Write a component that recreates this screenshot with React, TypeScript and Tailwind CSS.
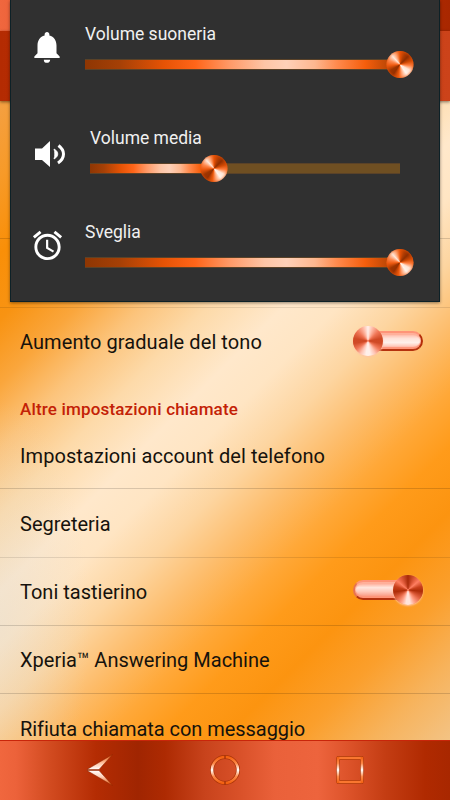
import type React from "react"
import { MdAlarm, MdNotifications } from "react-icons/md"
import { clsx } from "clsx"

const SLIDER_FILL =
  "bg-[linear-gradient(90deg,#8e3603_0%,#a54006_11%,#e65305_25%,#ff6519_35%,#ff9a68_46%,#fdc5a6_57%,#fdd0b8_64%,#fdb78f_73%,#ff8a4d_80%,#f55e0c_89%,#b54405_97%,#b54405_100%)]"

const NAV_GRADIENT =
  "bg-[linear-gradient(90deg,#f0673e_0px,#ec623a_16px,#d24b20_50px,#b42c03_96px,#a02501_138px,#ad2a02_165px,#c8431c_205px,#d95129_240px,#ea613a_275px,#ed643d_318px,#dd532a_348px,#c43d13_385px,#b02a01_425px,#a82700_450px)]"

function VolumeIcon() {
  return (
    <svg viewBox="0 0 38 38" className="size-[38px]" fill="none">
      <path d="M7 13.500h7L22 6v26L14 25H7z" fill="white" />
      <path d="M26 14c1.500 1 3.800 2.200 3.800 5s-2.300 4-3.800 5c.6-1.700.8-3.200.8-5s-.2-3.300-.8-5z" fill="white" stroke="white" strokeWidth="0.800" />
      <path d="M30.500 10.500c3.300 2.500 5 5 5 8.500s-1.700 6.500-5.500 9" stroke="white" strokeWidth="3" />
    </svg>
  )
}

function Slider({ label, value, inset }: { label: string; value: number; inset?: boolean }) {
  return (
    <div className={clsx("flex flex-col", inset ? "w-[310px]" : "w-[315px]")}>
      <span className="h-6 whitespace-nowrap text-[17.5px] leading-6 text-[#f0f0f0]">{label}</span>
      <div className="relative mt-[13px] h-[11px] border-y border-[#5a4228] bg-[#6f4f22]">
        <div className={clsx("h-full", SLIDER_FILL)} style={{ width: `${value}%` }} />
        <div
          className="absolute top-[-9.5px] size-[27px] -translate-x-1/2 rounded-full bg-[conic-gradient(#e85206_0deg,#b33d02_22deg,#8f2e00_45deg,#d24a04_72deg,#ff7d3c_95deg,#ffe4d4_120deg,#fff3ea_145deg,#ff9f6e_170deg,#ef5a0c_188deg,#963000_215deg,#9e3500_238deg,#ee5a10_265deg,#ff8a50_290deg,#ffe8da_318deg,#ff9c68_340deg,#e85206_360deg)] shadow-[inset_0_0_3px_#e55208]"
          style={{ left: `${value}%` }}
        />
      </div>
    </div>
  )
}

function Switch({ on }: { on?: boolean }) {
  return (
    <div className="relative flex h-[30px] w-[70px] flex-col justify-center">
      <div
        className={clsx(
          "h-5 rounded-full border-2 border-t-[#ff9478] border-b-[#b5320e] shadow-[inset_0_2px_1px_#ffb09a,inset_0_-2px_1px_#ff9478]",
          on
            ? "border-r-[#d9532f] border-l-[#e8724f] bg-[linear-gradient(#ff9b82,#ffe6de_35%,#ffc9bb_60%,#f98a70)]"
            : "border-r-[#b52c08] border-l-[#e8724f] bg-[linear-gradient(#ffab96,#ffe3da_35%,#fff0ea_60%,#ffab96)]",
        )}
      />
      <div
        className={clsx(
          "absolute top-0 size-[30px] rounded-full shadow-[0_1px_2px_#ffc4a4]",
          on
            ? "right-0 bg-[conic-gradient(#a82a08_0deg,#e86242_35deg,#ff8062_50deg,#c9401c_75deg,#ad2c08_95deg,#e0603e_125deg,#ff9c82_150deg,#ffe4dc_172deg,#ffe4dc_188deg,#ff9c82_210deg,#e0603e_235deg,#ad2c08_262deg,#c9401c_285deg,#ff8062_310deg,#e86242_325deg,#a82a08_360deg)]"
            : "left-0 bg-[conic-gradient(#fff0ea_0deg,#ffb9a4_20deg,#f07656_48deg,#cf4824_80deg,#d04a26_100deg,#f07656_125deg,#ffc3b2_150deg,#fff0ea_172deg,#fff0ea_188deg,#ffc3b2_210deg,#f07656_235deg,#d04a26_260deg,#cf4824_280deg,#f07656_312deg,#ffb9a4_340deg,#fff0ea_360deg)]",
        )}
      />
    </div>
  )
}

function Row({ label, className, children }: { label: string; className: string; children?: React.ReactNode }) {
  return (
    <div className={clsx("flex shrink-0 justify-between pr-[27px] pl-5", className)}>
      <span className="h-7 whitespace-nowrap text-[20px] leading-7 text-[#16120c]">{label}</span>
      {children}
    </div>
  )
}

function VolumePanel() {
  return (
    <div className="absolute top-0 left-[10px] flex h-[302px] w-[430px] flex-col border-x border-b border-[#0d2127] bg-[#303030] shadow-[0_1px_3px_rgba(0,0,0,0.45)]">
      <div className="flex h-[97px] pt-[22px] pl-[17px]">
        <MdNotifications className="mt-[6px] mr-[19px] size-[38px] text-white" />
        <Slider label="Volume suoneria" value={100} />
      </div>
      <div className="flex h-[98px] pt-[29px] pl-[17px]">
        <div className="mt-[9px] mr-[24px]">
          <VolumeIcon />
        </div>
        <Slider label="Volume media" value={40} inset />
      </div>
      <div className="flex pt-[25px] pl-[19px]">
        <MdAlarm className="mt-[8px] mr-[20px] size-[35px] text-white" />
        <Slider label="Sveglia" value={100} />
      </div>
    </div>
  )
}

function NavBar() {
  return (
    <nav className={clsx("flex h-[60px] shrink-0 justify-between border-t border-[#c9250a] px-[84px]", NAV_GRADIENT)}>
      <svg viewBox="0 0 30 36" className="mt-[11px] h-9 w-[30px]">
        <defs>
          <linearGradient id="wing-up" x1="0" y1="1" x2="0" y2="0">
            <stop offset="0" stopColor="#fff" />
            <stop offset="0.45" stopColor="#ffc09c" />
            <stop offset="1" stopColor="#e8560c" />
          </linearGradient>
          <linearGradient id="wing-down" x1="0" y1="0" x2="0" y2="1">
            <stop offset="0" stopColor="#fff" />
            <stop offset="0.4" stopColor="#ffd4bd" />
            <stop offset="1" stopColor="#e8560c" />
          </linearGradient>
        </defs>
        <path d="M3 17.500L28.500 2.500L15 17.500z" fill="url(#wing-up)" stroke="#8a2500" strokeWidth="0.500" />
        <path d="M3 18.500L28.500 33.500L15 18.500z" fill="url(#wing-down)" stroke="#8a2500" strokeWidth="0.500" />
      </svg>
      <svg viewBox="0 0 32 32" className="mt-[13px] ml-[2px] size-8" fill="none">
        <defs>
          <linearGradient id="ring" gradientUnits="userSpaceOnUse" x1="0" y1="3" x2="0" y2="29">
            <stop offset="0" stopColor="#f2600f" />
            <stop offset="0.25" stopColor="#ff8a4a" />
            <stop offset="0.5" stopColor="#fff" />
            <stop offset="0.75" stopColor="#ff8a4a" />
            <stop offset="1" stopColor="#f2600f" />
          </linearGradient>
        </defs>
        <circle cx="16" cy="16" r="13" stroke="#a93408" strokeWidth="4" />
        <circle cx="16" cy="16" r="13" stroke="url(#ring)" strokeWidth="2.600" />
        <path d="M16 1v4M16 27v4" stroke="#a93408" strokeWidth="1.500" />
      </svg>
      <svg viewBox="0 0 32 32" className="mt-[13px] size-8" fill="none">
        <rect x="4" y="4" width="24" height="24" rx="1" stroke="#a93408" strokeWidth="4" />
        <path d="M4 4h24M4 28h24" stroke="#f9772f" strokeWidth="2.400" />
        <path d="M4 3v26M28 3v26" stroke="url(#ring)" strokeWidth="2.600" />
      </svg>
    </nav>
  )
}

export default function App() {
  return (
    <div className="relative flex h-[800px] w-[450px] flex-col overflow-hidden font-[Roboto,sans-serif]">
      <div className={clsx("h-[31px] shrink-0", NAV_GRADIENT)} />
      <div className="z-0 h-[70px] shrink-0 bg-[linear-gradient(90deg,#b42b02,#cc431a)] shadow-[0_1px_3px_rgba(0,0,0,0.5)]" />

      <main className="flex min-h-0 flex-1 flex-col overflow-hidden bg-[radial-gradient(ellipse_90px_220px_at_0_520px,rgba(215,218,215,0.35),rgba(215,218,215,0)),linear-gradient(135deg,#f4a042_0%,#f79a28_7%,#f98f08_14%,#f89312_20%,#faa63c_26%,#fcc47c_32%,#fddaa9_38%,#ffe8cb_45%,#ffe5c3_50%,#fdd5a0_56%,#fdbd6c_62%,#ffa838_68%,#ff9b1a_73%,#fc9410_79%,#fb9f2c_86%,#f7b35c_93%,#f3c384_100%)]">
        <div className="h-[138px] shrink-0 border-b border-black/15" />
        <div className="h-[69px] shrink-0 border-b border-black/10" />
        <Row label="Aumento graduale del tono" className="h-[80px] pt-5 tracking-[0.08px]">
          <div className="-mt-[2px]">
            <Switch />
          </div>
        </Row>
        <h2 className="h-[42px] shrink-0 pt-[9px] pl-5 text-[17px] leading-6 font-medium tracking-[0.17px] text-[#c32106]">
          Altre impostazioni chiamate
        </h2>
        <Row label="Impostazioni account del telefono" className="h-[59px] border-b border-black/15 pt-3 tracking-[0.08px]" />
        <Row label="Segreteria" className="h-[69px] border-b border-black/10 pt-[21px]" />
        <Row label="Toni tastierino" className="h-[68px] border-b border-black/15 pt-[20px]">
          <div className="-mt-[3px]">
            <Switch on />
          </div>
        </Row>
        <Row label="Xperia™ Answering Machine" className="h-[68px] border-b border-black/15 pt-5" />
        <Row label="Rifiuta chiamata con messaggio" className="h-[68px] pt-[21px] tracking-[-0.05px]" />
      </main>

      <NavBar />
      <VolumePanel />
    </div>
  )
}
